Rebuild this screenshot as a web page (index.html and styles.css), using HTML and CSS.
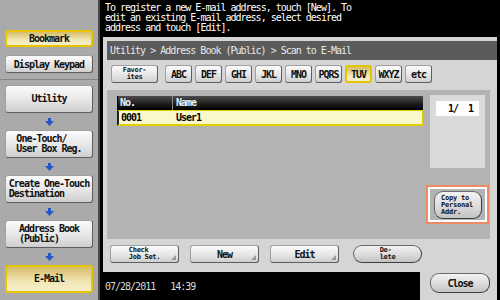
FILE: index.html
```html
<!DOCTYPE html>
<html lang="en">
<head>
  <meta charset="UTF-8" />
  <title>Scan to E-Mail</title>
  <link rel="stylesheet" href="styles.css">
</head>
<body>
  <div class="screen">

    <aside class="side">
      <div class="side-top">
        <button class="btn btn-yellow bookmark">Bookmark</button>
        <button class="btn keypad">Display Keypad</button>
      </div>
      <div class="side-nav">
        <button class="btn nav-btn"><span>Utility</span></button>
        <div class="arrow"><svg width="9" height="8" viewBox="0 0 9 8"><path d="M3 0h3v3h3L4.5 8 0 3h3z"/></svg></div>
        <button class="btn nav-btn"><span>One-Touch/<br>User Box Reg.</span></button>
        <div class="arrow"><svg width="9" height="8" viewBox="0 0 9 8"><path d="M3 0h3v3h3L4.5 8 0 3h3z"/></svg></div>
        <button class="btn nav-btn"><span>Create One-Touch<br>Destination</span></button>
        <div class="arrow"><svg width="9" height="8" viewBox="0 0 9 8"><path d="M3 0h3v3h3L4.5 8 0 3h3z"/></svg></div>
        <button class="btn nav-btn"><span>Address Book<br>(Public)</span></button>
        <div class="arrow"><svg width="9" height="8" viewBox="0 0 9 8"><path d="M3 0h3v3h3L4.5 8 0 3h3z"/></svg></div>
        <button class="btn btn-yellow nav-btn current"><span>E-Mail</span></button>
      </div>
    </aside>

    <main class="main">
      <div class="msg">To register a new E-mail address, touch [New]. To<br>edit an existing E-mail address, select desired<br>address and touch [Edit].</div>

      <div class="panel">
        <div class="crumb">Utility &gt; Address Book (Public) &gt; Scan to E-Mail</div>

        <div class="tabs">
          <button class="btn tab fav small">Favor-<br>ites</button>
          <button class="btn tab">ABC</button>
          <button class="btn tab">DEF</button>
          <button class="btn tab">GHI</button>
          <button class="btn tab">JKL</button>
          <button class="btn tab">MNO</button>
          <button class="btn tab">PQRS</button>
          <button class="btn btn-yellow tab">TUV</button>
          <button class="btn tab">WXYZ</button>
          <button class="btn tab">etc</button>
        </div>

        <div class="list">
          <div class="table">
            <div class="thead">
              <div class="col-no">No.</div>
              <div class="col-name">Name</div>
            </div>
            <div class="row selected">
              <div class="col-no">0001</div>
              <div class="col-name">User1</div>
            </div>
          </div>
          <div class="list-side">
            <div class="pager"><div class="page-num">1/  1</div></div>
            <div class="copy-box">
              <button class="pill copy">Copy to<br>Personal<br>Addr.</button>
            </div>
          </div>
        </div>

        <div class="actions">
          <button class="btn act more small"><span>Check<br>Job Set.</span></button>
          <button class="btn act more">New</button>
          <button class="btn act more">Edit</button>
          <button class="pill act delete small"><span>De-<br>lete</span></button>
        </div>
      </div>

      <div class="status">
        <div class="clock">07/28/2011&nbsp;&nbsp;&nbsp;14:39</div>
        <div class="close-area">
          <button class="pill close">Close</button>
        </div>
      </div>
    </main>

  </div>
</body>
</html>
```

FILE: styles.css
```css
body {
  margin: 0;
  padding: 0;
  background: #000;
  font-family: "DejaVu Sans Mono", "Liberation Mono", monospace;
  font-size: 10px;
  letter-spacing: -1px;
}

button {
  font: inherit;
  letter-spacing: inherit;
  color: #111;
  margin: 0;
  padding: 0;
  cursor: pointer;
}

.screen {
  display: flex;
  width: 500px;
  height: 300px;
  overflow: hidden;
}

/* Left column */
.side {
  width: 100px;
  box-sizing: border-box;
  background: #aaaaaa;
  border-right: 2px solid #4a4a4a;
  display: flex;
  flex-direction: column;
}

.side-top {
  height: 80px;
  box-sizing: border-box;
  border-bottom: 1px solid #858585;
  padding: 30px 0 0 5px;
  display: flex;
  flex-direction: column;
  gap: 8px;
}

.btn {
  background: linear-gradient(#fbfbfb, #e6e6e6 55%, #cfcfcf);
  border: 1px solid #a0a0a0;
  border-right-color: #5e5e5e;
  border-bottom-color: #5e5e5e;
  border-radius: 3px;
  font-weight: bold;
  box-sizing: border-box;
}

.btn-yellow {
  background: linear-gradient(#d6bd6c, #e6d391 35%, #f1e6b4 60%, #f6efcc);
  border: 2px solid #e6c400;
}

.bookmark {
  width: 88px;
  height: 17px;
}

.keypad {
  width: 88px;
  height: 18px;
}

.side-nav {
  padding: 5px 0 0 5px;
  display: flex;
  flex-direction: column;
}

.nav-btn {
  width: 88px;
  height: 28px;
  display: flex;
  align-items: center;
  justify-content: center;
  line-height: 10px;
}

.nav-btn span {
  text-align: left;
}

.arrow {
  width: 88px;
  height: 17px;
  display: flex;
  align-items: center;
  justify-content: center;
}

.arrow svg {
  fill: #2458c8;
}

/* Right side */
.main {
  width: 400px;
  display: flex;
  flex-direction: column;
}

.msg {
  height: 37px;
  box-sizing: border-box;
  padding: 3px 5px 0;
  color: #fff;
  line-height: 10px;
}

.panel {
  height: 235px;
  box-sizing: border-box;
  margin: 0 3px;
  padding: 4px 0 0 4px;
  background: #d5d5d5;
}

.crumb {
  height: 19px;
  line-height: 19px;
  padding-left: 3px;
  background: #5b5b5b;
  color: #e8e8e8;
}

.tabs {
  margin-top: 5px;
  padding-left: 4px;
  display: flex;
  gap: 3px;
}

.tab {
  width: 27px;
  height: 18px;
}

.fav {
  width: 47px;
  margin-right: 4px;
}

.small {
  font-size: 7px;
  line-height: 7px;
  letter-spacing: -0.3px;
}

.list {
  margin-top: 7px;
  width: 383px;
  height: 149px;
  box-sizing: border-box;
  padding: 5px 0 0 10px;
  background: #b3b3b3;
  display: flex;
  gap: 3px;
}

.table {
  width: 306px;
  margin-top: 1px;
  align-self: flex-start;
}

.thead {
  height: 14px;
  display: flex;
  background: linear-gradient(#4c4c4c, #1a1a1a 60%, #000);
  border-left: 1px solid #000;
  color: #f0f0f0;
  font-weight: bold;
  line-height: 14px;
}

.col-no {
  width: 52px;
  padding-left: 2px;
  border-right: 1px solid #8a8a8a;
}

.col-name {
  padding-left: 3px;
}

.row {
  height: 16px;
  box-sizing: border-box;
  display: flex;
  line-height: 13px;
  font-weight: bold;
  border-left: 1px solid #000;
}

.selected {
  background: #faf7cb;
  border: 1px solid #e2cf00;
  border-bottom-width: 2px;
  border-left: 2px solid #222;
}

.selected .col-no {
  width: 51px;
  border-right: none;
}

.selected .col-name {
  padding-left: 4px;
}

.list-side {
  width: 63px;
  display: flex;
  flex-direction: column;
}

.pager {
  margin: 0 4px;
  height: 73px;
  box-sizing: border-box;
  padding: 6px;
  background: #dadada;
}

.page-num {
  height: 15px;
  line-height: 15px;
  background: #fff;
  white-space: pre;
  text-align: right;
  padding-right: 6px;
  font-weight: bold;
}

.copy-box {
  margin-top: 17px;
  height: 39px;
  box-sizing: border-box;
  border: 2px solid #ee8b61;
  box-shadow: inset 0 0 0 2px #fff;
  padding: 4px 0 0 6px;
}

.pill {
  background: linear-gradient(#f2f2f2, #dedede 50%, #c2c2c2);
  border: 1px solid #6a6a6a;
  border-right-color: #3e3e3e;
  border-bottom-color: #3e3e3e;
  border-radius: 9px;
  font-weight: bold;
  box-sizing: border-box;
}

.copy {
  width: 48px;
  height: 28px;
  text-align: left;
  padding-left: 6px;
  font-size: 7px;
  line-height: 7px;
  letter-spacing: -0.2px;
}

.actions {
  margin-top: 6px;
  padding-left: 3px;
  display: flex;
  gap: 11px;
}

.act {
  width: 69px;
  height: 18px;
  display: flex;
  align-items: center;
  justify-content: center;
}

.act span {
  text-align: left;
}

.more {
  position: relative;
}

/* little corner mark on buttons that open a sub screen */
.more::after {
  content: "";
  position: absolute;
  right: 2px;
  bottom: 2px;
  border-left: 5px solid transparent;
  border-bottom: 5px solid #9a9a9a;
}

.delete {
  margin-left: 3px;
}

.status {
  height: 28px;
  display: flex;
}

.clock {
  flex: 1;
  padding: 9px 0 0 5px;
  color: #dcdcdc;
}

.close-area {
  width: 77px;
  margin-right: 3px;
  box-sizing: border-box;
  background: #d5d5d5;
  padding: 1px 0 0 10px;
}

.close {
  width: 60px;
  height: 20px;
}
```
